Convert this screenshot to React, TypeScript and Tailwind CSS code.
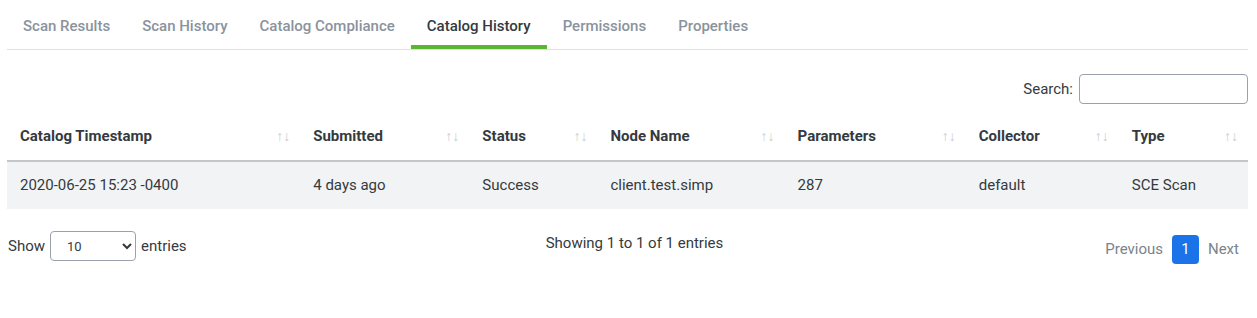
import { useState } from 'react';

const tabs = ['Scan Results', 'Scan History', 'Catalog Compliance', 'Catalog History', 'Permissions', 'Properties'];

const columns = [
  { label: 'Catalog Timestamp', width: 'w-[293px]' },
  { label: 'Submitted', width: 'w-[169px]' },
  { label: 'Status', width: 'w-[128px]' },
  { label: 'Node Name', width: 'w-[187px]' },
  { label: 'Parameters', width: 'w-[181px]' },
  { label: 'Collector', width: 'w-[153px]' },
  { label: 'Type', width: 'w-[129px]' },
];

const rows = [
  ['2020-06-25 15:23 -0400', '4 days ago', 'Success', 'client.test.simp', '287', 'default', 'SCE Scan'],
];

function SortIcon() {
  return (
    <span className="absolute right-[10px] top-1/2 -translate-y-1/2 text-[14px] leading-none text-[#c9cdd1] font-normal">
      ↑↓
    </span>
  );
}

export default function App() {
  const [active, setActive] = useState('Catalog History');
  const [search, setSearch] = useState('');

  return (
    <div className="pl-[7px] pr-[9px] text-[#343a40] text-[15px]" style={{ fontFamily: 'Roboto, "Noto Sans", sans-serif' }}>
      <ul className="flex border-b border-[#dee2e6] h-[50px]">
        {tabs.map((t) => (
          <li key={t}>
            <button
              onClick={() => setActive(t)}
              className={
                'h-[49px] px-4 pt-[8px] font-medium text-[15px] border-b-4 ' +
                (t === active ? 'text-[#343a40] border-[#5cb531]' : 'text-[#8a939d] border-transparent')
              }
            >
              {t}
            </button>
          </li>
        ))}
      </ul>

      <div className="flex justify-end items-center gap-[6px] mt-[24px]">
        <label htmlFor="search">Search:</label>
        <input
          id="search"
          value={search}
          onChange={(e) => setSearch(e.target.value)}
          className="w-[169px] h-[30px] border border-[#9aa3ad] rounded-[4px] px-2 outline-none"
        />
      </div>

      <table className="w-full table-fixed mt-[8px] border-collapse">
        <thead>
          <tr className="border-b-2 border-[#c3c7cc]">
            {columns.map((c) => (
              <th key={c.label} className={'relative text-left font-bold h-[49px] pl-[13px] pr-[30px] ' + c.width}>
                {c.label}
                <SortIcon />
              </th>
            ))}
          </tr>
        </thead>
        <tbody>
          {rows.map((r, i) => (
            <tr key={i} className="bg-[#f2f3f5]">
              {r.map((cell, j) => (
                <td key={j} className="h-[48px] pl-[13px]">
                  {cell}
                </td>
              ))}
            </tr>
          ))}
        </tbody>
      </table>

      <div className="grid grid-cols-3 items-center mt-[14px]">
        <div className="flex items-center gap-[5px] pl-[1px] pt-[5px]">
          <span>Show</span>
          <select className="w-[86px] h-[30px] border border-[#9aa3ad] rounded-[4px] pl-[12px] text-[13px]">
            <option>10</option>
            <option>25</option>
            <option>50</option>
            <option>100</option>
          </select>
          <span>entries</span>
        </div>
        <div className="text-center pl-[14px]">Showing 1 to 1 of 1 entries</div>
        <div className="flex justify-end items-center gap-[9px] pr-[9px] pt-[12px]">
          <button className="text-[#7b838b]">Previous</button>
          <button className="w-[27px] h-[29px] rounded-[4px] bg-[#1a73e8] text-white">1</button>
          <button className="text-[#7b838b]">Next</button>
        </div>
      </div>
    </div>
  );
}
